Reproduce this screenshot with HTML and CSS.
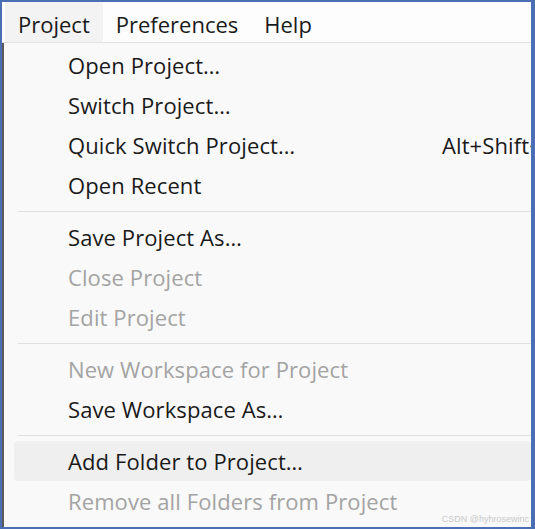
FILE: index.html
```html
<!DOCTYPE html>
<html>
<head>
<meta charset="utf-8">
<link rel="stylesheet" href="styles.css">
</head>
<body>
<div class="frame">
  <div class="menubar">
    <span class="top-item active">Project</span>
    <span class="top-item">Preferences</span>
    <span class="top-item">Help</span>
  </div>
  <div class="body-row">
    <div class="edge"></div>
    <div class="menu">
      <div class="item"><span class="label">Open Project…</span></div>
      <div class="item"><span class="label">Switch Project…</span></div>
      <div class="item"><span class="label">Quick Switch Project…</span><span class="shortcut">Alt+Shift+P</span></div>
      <div class="item"><span class="label">Open Recent</span></div>
      <div class="sep"></div>
      <div class="item"><span class="label">Save Project As…</span></div>
      <div class="item disabled"><span class="label">Close Project</span></div>
      <div class="item disabled"><span class="label">Edit Project</span></div>
      <div class="sep"></div>
      <div class="item disabled"><span class="label">New Workspace for Project</span></div>
      <div class="item"><span class="label">Save Workspace As…</span></div>
      <div class="sep"></div>
      <div class="item hover"><span class="label">Add Folder to Project…</span></div>
      <div class="item disabled"><span class="label">Remove all Folders from Project</span></div>
      <div class="watermark">CSDN @hyhrosewinc</div>
    </div>
  </div>
</div>
</body>
</html>
```
FILE: styles.css
```css
html, body {
  margin: 0;
  padding: 0;
  width: 535px;
  height: 529px;
  overflow: hidden;
  background: #4a6fb5;
}
.frame {
  box-sizing: border-box;
  width: 535px;
  height: 529px;
  border-style: solid;
  border-color: #4a6fb5;
  border-width: 2px 4px 2px 2px;
  background: #f9f9f9;
  display: flex;
  flex-direction: column;
  overflow: hidden;
  font-family: "Open Sans", "Noto Sans", sans-serif;
  color: #1a1a1a;
}
.menubar {
  height: 40px;
  flex: none;
  background: #fdfdfd;
  border-bottom: 1px solid #e2e2e2;
  display: flex;
  align-items: stretch;
  padding-left: 3px;
  font-size: 22px;
}
.top-item {
  padding: 4px 13px 0;
  line-height: 36px;
}
.top-item.active {
  background: #f3f3f3;
}
.body-row {
  flex: 1;
  display: flex;
  min-height: 0;
}
.edge {
  width: 2px;
  flex: none;
  background: #5b5b5b;
}
.menu {
  flex: 1;
  position: relative;
  background: #f9f9f9;
  padding-top: 2px;
  padding-left: 1px;
  min-width: 0;
  overflow: hidden;
}
.item {
  height: 40px;
  display: flex;
  align-items: center;
  font-size: 22px;
  letter-spacing: 0.1px;
  white-space: nowrap;
  margin-left: 9px;
  border-radius: 4px;
}
.item .label {
  padding-left: 54px;
  flex: none;
  width: 374px;
}
.item .shortcut {
  flex: none;
}
.item.disabled {
  color: #a3a3a3;
}
.item.hover {
  background: #efefef;
}
.sep {
  height: 1px;
  background: #e0e0e0;
  margin: 6px 0 5px 13px;
}
.watermark {
  position: absolute;
  right: 2px;
  bottom: 3px;
  font-family: "Liberation Sans", sans-serif;
  font-size: 9px;
  color: #c9c9c9;
}
```
